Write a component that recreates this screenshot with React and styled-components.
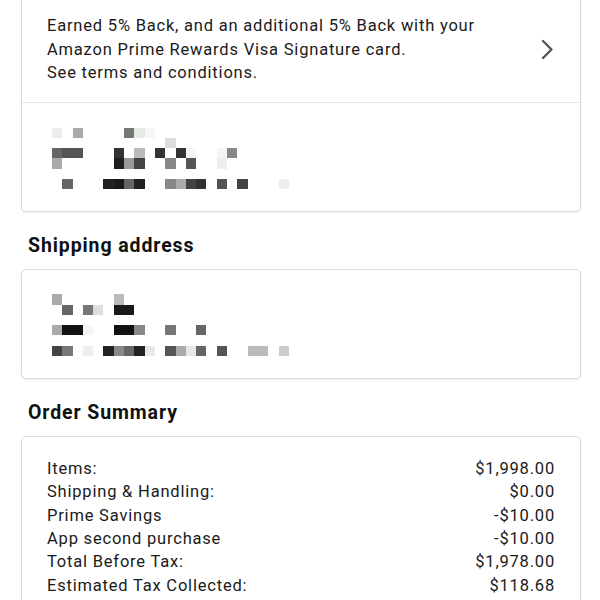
import React from "react";
import styled, { createGlobalStyle } from "styled-components";

const GlobalStyle = createGlobalStyle`
  html, body {
    margin: 0;
    padding: 0;
    background: #ffffff;
  }
  body {
    font-family: Roboto, "Liberation Sans", Arial, sans-serif;
    color: #0f1111;
    overflow: hidden;
  }
`;

// mosaic rows: each row is a list of [column, colour]
const paymentMosaic = [
  [[0, "#ececec"], [2, "#aaaaaa"], [7, "#777777"], [8, "#e6ebe6"], [9, "#f7f7f7"]],
  [[11, "#dddddd"]],
  [[0, "#666666"], [1, "#555555"], [2, "#555555"], [6, "#333333"], [8, "#bbbbbb"], [10, "#333333"], [12, "#333333"], [13, "#f5f5f5"], [16, "#f4f4f4"], [17, "#888888"]],
  [[0, "#aaaaaa"], [6, "#1e1e1e"], [7, "#999999"], [8, "#444444"], [11, "#888888"], [13, "#555555"], [16, "#eeeeee"]],
  [],
  [[1, "#666666"], [5, "#222222"], [6, "#1a1a1a"], [7, "#666666"], [8, "#222222"], [11, "#888888"], [12, "#aaaaaa"], [13, "#444444"], [14, "#333333"], [16, "#555555"], [18, "#444444"], [22, "#eeeeee"]],
];

const addressMosaic = [
  [[0, "#aaaaaa"], [6, "#bbbbbb"]],
  [[1, "#666666"], [3, "#777777"], [4, "#dddddd"], [6, "#1a1a1a"], [7, "#1a1a1a"]],
  [],
  [[0, "#aaaaaa"], [1, "#111111"], [2, "#111111"], [3, "#f5f5f5"], [6, "#111111"], [7, "#111111"], [8, "#888888"], [11, "#777777"], [14, "#666666"]],
  [],
  [[0, "#444444"], [1, "#777777"], [3, "#eef0ee"], [5, "#222222"], [6, "#888888"], [7, "#666666"], [8, "#222222"], [9, "#e8e8e8"], [11, "#555555"], [12, "#aaaaaa"], [13, "#e8e8e8"], [14, "#666666"], [16, "#555555"], [19, "#bbbbbb"], [20, "#bbbbbb"], [22, "#cccccc"]],
];

const summary = [
  ["Items:", "$1,998.00"],
  ["Shipping & Handling:", "$0.00"],
  ["Prime Savings", "-$10.00"],
  ["App second purchase", "-$10.00"],
  ["Total Before Tax:", "$1,978.00"],
  ["Estimated Tax Collected:", "$118.68"],
  ["Order Total:", "$2,096.68"],
];

const Page = styled.div`
  display: flex;
  flex-direction: column;
  padding: 0 19px 0 21px;
`;

const Card = styled.div`
  border: 1px solid #d9dcdc;
  border-top: ${(p) => (p.$open ? "none" : "1px solid #d9dcdc")};
  border-radius: ${(p) => (p.$open ? "0 0 5px 5px" : "5px")};
  box-shadow: 0 1px 2px rgba(15, 17, 17, 0.08);
  background: #fff;
`;

const RewardRow = styled.div`
  display: flex;
  align-items: center;
  justify-content: space-between;
  padding: 14px 26px 17px 25px;
  border-bottom: 1px solid #e7e7e7;
`;

const RewardText = styled.p`
  margin: 0;
  font-size: 16.5px;
  line-height: 23.5px;
  letter-spacing: 0.8px;
  color: #1a1a1a;
`;

const Chevron = styled.svg`
  width: 13px;
  height: 21px;
  flex: none;
`;

const MosaicArea = styled.div`
  padding: ${(p) => p.$pad};
`;

const MosaicGrid = styled.div`
  display: grid;
  grid-template-columns: repeat(23, 10.3px);
  grid-auto-rows: 10.3px;
`;

const Cell = styled.span`
  background: ${(p) => p.$tone};
`;

const Heading = styled.h2`
  margin: 0;
  padding: ${(p) => p.$pad};
  padding-left: 7px;
  font-size: 19.5px;
  line-height: 24px;
  letter-spacing: 0.9px;
  font-weight: 700;
  color: #0f1111;
`;

const SummaryList = styled.div`
  display: flex;
  flex-direction: column;
  padding: 20px 25px 20px 25px;
`;

const SummaryRow = styled.div`
  display: flex;
  justify-content: space-between;
  font-size: 16.5px;
  line-height: 23.3px;
  letter-spacing: 0.8px;
  color: #1a1a1a;
`;

const Mosaic = ({ rows }) => (
  <MosaicGrid>
    {rows.map((row, r) =>
      row.map(([c, tone]) => (
        <Cell
          key={`${r}-${c}`}
          $tone={tone}
          style={{ gridRow: r + 1, gridColumn: c + 1 }}
        />
      ))
    )}
  </MosaicGrid>
);

const App = () => {
  return (
    <>
      <GlobalStyle />
      <Page>
        <Card $open>
          <RewardRow>
            <RewardText>
              Earned 5% Back, and an additional 5% Back with your
              <br />
              Amazon Prime Rewards Visa Signature card.
              <br />
              See terms and conditions.
            </RewardText>
            <Chevron viewBox="0 0 13 21">
              <polyline
                points="2,2 10.5,10.5 2,19"
                fill="none"
                stroke="#555"
                strokeWidth="2.4"
                strokeLinecap="round"
                strokeLinejoin="round"
              />
            </Chevron>
          </RewardRow>
          <MosaicArea $pad="25px 20px 22px 30px">
            <Mosaic rows={paymentMosaic} />
          </MosaicArea>
        </Card>

        <Heading $pad="22px 0 11px">Shipping address</Heading>
        <Card>
          <MosaicArea $pad="24px 20px 22px 30px">
            <Mosaic rows={addressMosaic} />
          </MosaicArea>
        </Card>

        <Heading $pad="22px 0 11px">Order Summary</Heading>
        <Card>
          <SummaryList>
            {summary.map(([label, value]) => (
              <SummaryRow key={label}>
                <span>{label}</span>
                <span>{value}</span>
              </SummaryRow>
            ))}
          </SummaryList>
        </Card>
      </Page>
    </>
  );
};

export default App;
